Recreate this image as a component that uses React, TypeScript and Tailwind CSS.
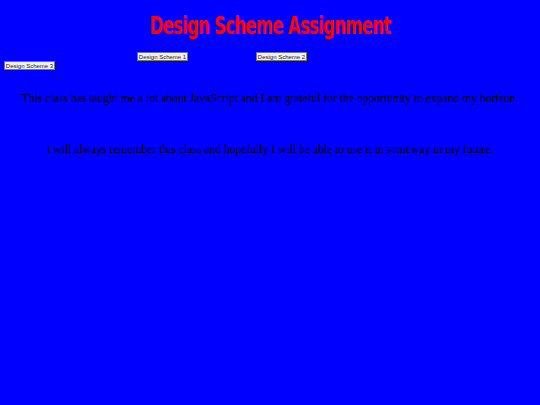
import React from 'react';

const schemes = ['Design Scheme 1', 'Design Scheme 2', 'Design Scheme 3'];

function SchemeButton({ label, className = '' }: { label: string; className?: string }) {
  return (
    <button
      type="button"
      className={`h-[9px] w-[51px] bg-[#efefef] border border-[#767676] text-[6px] leading-none text-[#222] flex items-center justify-center whitespace-nowrap ${className}`}
      style={{ fontFamily: '"Liberation Sans", Arial, sans-serif' }}
    >
      {label}
    </button>
  );
}

export default function App() {
  return (
    <div className="w-[540px] h-[405px] bg-[#0000ff] overflow-hidden">
      {/* Header */}
      <div className="pt-[13px] flex justify-center">
        <h1
          className="text-[#ff0000] text-[25px] leading-[26px] font-bold tracking-[-1px] scale-x-[0.735] whitespace-nowrap"
          style={{ fontFamily: '"DejaVu Sans Condensed", "Liberation Sans Narrow", sans-serif' }}
        >
          Design Scheme Assignment
        </h1>
      </div>

      {/* Scheme switches */}
      <div className="mt-[13px] flex">
        <SchemeButton label={schemes[0]} className="ml-[137px]" />
        <SchemeButton label={schemes[1]} className="ml-[68px]" />
      </div>
      <div className="flex">
        <SchemeButton label={schemes[2]} className="ml-[4px]" />
      </div>

      {/* Text */}
      <div
        className="mt-[22px] text-center text-black text-[11.6px]"
        style={{ fontFamily: '"Liberation Serif", "Times New Roman", serif' }}
      >
        <p className="leading-[14px]">
          This class has taught me a lot about JavaScript and I am grateful for the opportunity to expand my horizon.
        </p>
        <p className="mt-[37px] leading-[14px]">
          I will always remember this class and hopefully I will be able to use it in someway in my future.
        </p>
      </div>
    </div>
  );
}
